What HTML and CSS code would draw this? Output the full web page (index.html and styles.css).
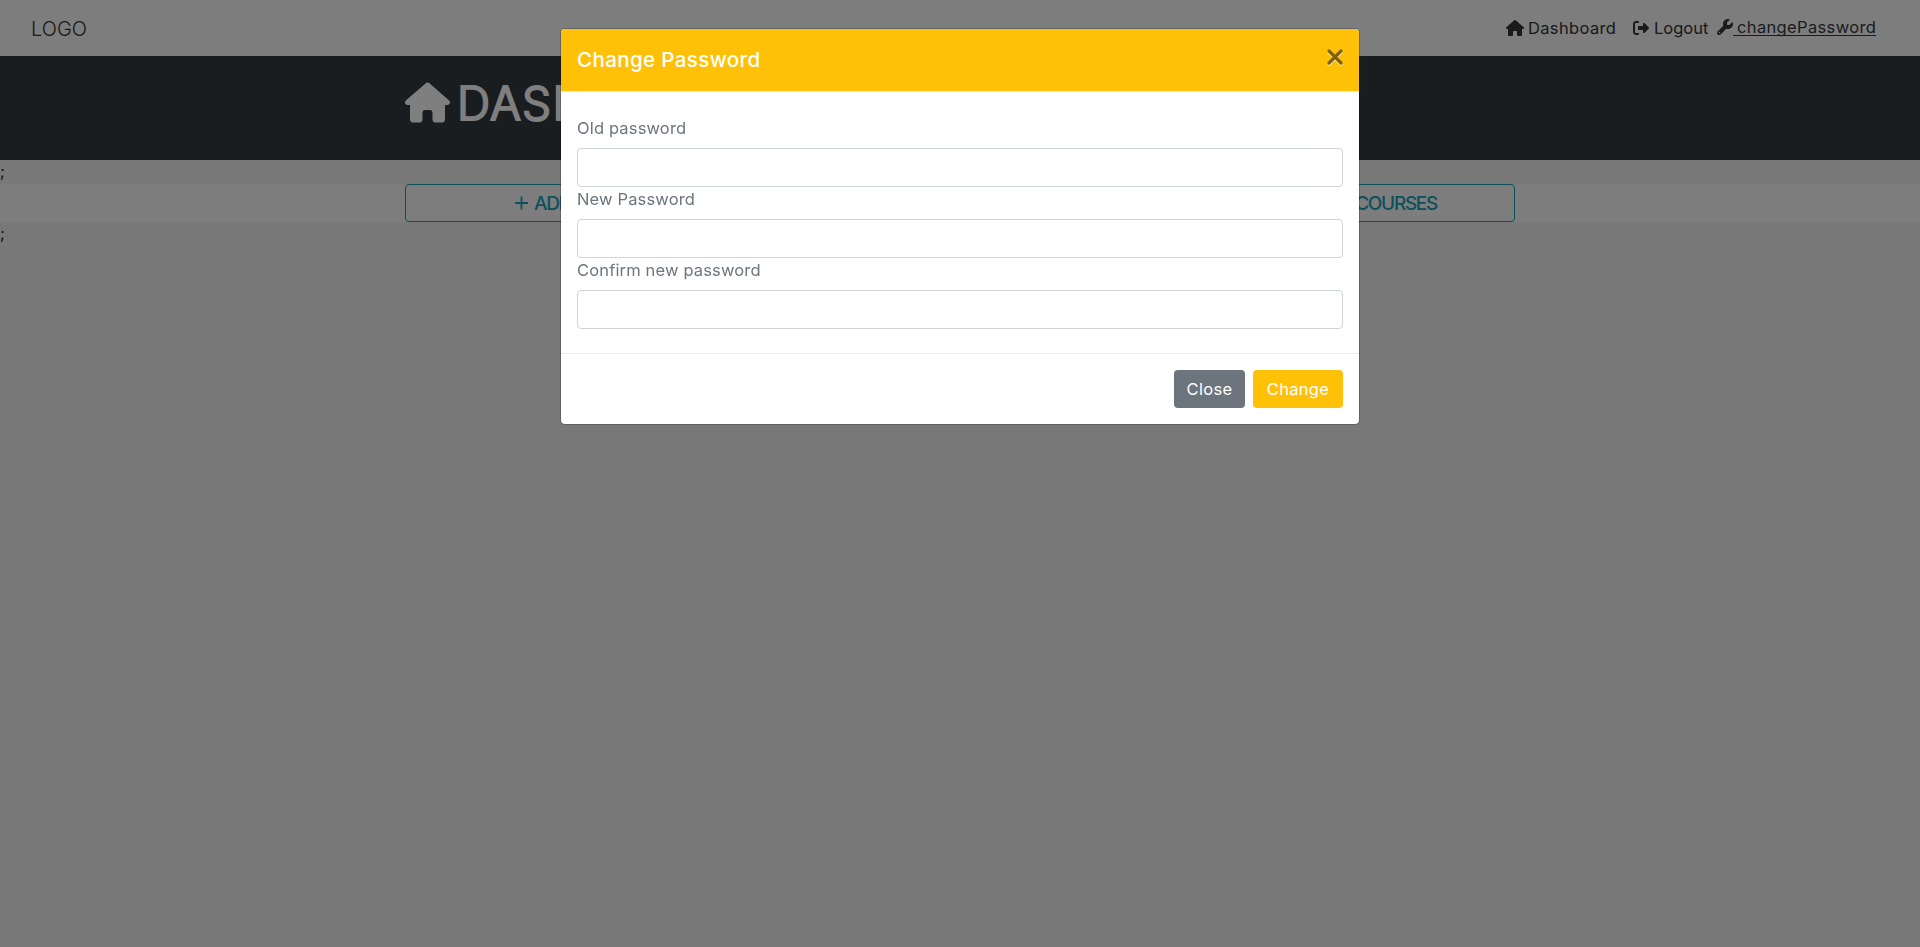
FILE: index.html
```html
<!DOCTYPE html>
<html lang="en">
<head>
<meta charset="utf-8">
<title>Dashboard</title>
<link rel="stylesheet" href="styles.css">
</head>
<body>
<svg class="sprite" aria-hidden="true">
  <symbol id="house" viewBox="0 0 576 512"><path d="M575.8 255.5c0 18-15 32.1-32 32.1h-32l.7 160.2c0 2.7-.2 5.4-.5 8.1V472c0 22.1-17.9 40-40 40H456c-1.100 0-2.200 0-3.300-.1c-1.400 .1-2.800 .1-4.200 .1H416 392c-22.100 0-40-17.900-40-40V448 384c0-17.700-14.300-32-32-32H256c-17.700 0-32 14.300-32 32v64 24c0 22.100-17.900 40-40 40H160 128.100c-1.500 0-3-.1-4.500-.2c-1.200 .1-2.400 .2-3.600 .2H104c-22.100 0-40-17.900-40-40V360c0-.9 0-1.900 .1-2.800V287.600H32c-18 0-32-14-32-32.100c0-9 3-17 10-24L266.400 8c7-7 15-8 22-8s15 2 21 7L564.800 231.500c8 7 12 15 11 24z"/></symbol>
  <symbol id="exit" viewBox="0 0 512 512"><path d="M377.900 105.900L500.700 228.700c7.200 7.200 11.300 17.100 11.300 27.300s-4.100 20.100-11.300 27.300L377.900 406.100c-6.400 6.400-15 9.900-24 9.900c-18.700 0-33.900-15.200-33.900-33.900l0-62.100-128 0c-17.700 0-32-14.300-32-32l0-64c0-17.700 14.300-32 32-32l128 0 0-62.100c0-18.700 15.200-33.900 33.900-33.900c9 0 17.600 3.600 24 9.900zM160 96L96 96c-17.700 0-32 14.300-32 32l0 256c0 17.700 14.300 32 32 32l64 0c17.700 0 32 14.300 32 32s-14.300 32-32 32l-64 0c-53 0-96-43-96-96L0 128C0 75 43 32 96 32l64 0c17.700 0 32 14.300 32 32s-14.300 32-32 32z"/></symbol>
  <symbol id="wrench" viewBox="0 0 512 512"><path d="M352 320c88.400 0 160-71.600 160-160c0-15.300-2.200-30.100-6.200-44.200c-3.100-10.800-16.400-13.200-24.300-5.300l-76.800 76.800c-3 3-7.100 4.700-11.300 4.700H336c-8.800 0-16-7.200-16-16V118.600c0-4.200 1.700-8.300 4.700-11.300l76.800-76.800c7.900-7.900 5.400-21.200-5.300-24.300C382.100 2.200 367.300 0 352 0C263.600 0 192 71.600 192 160c0 19.100 3.400 37.500 9.500 54.500L19.900 396.100C7.200 408.800 0 426.100 0 444.100C0 481.600 30.400 512 67.900 512c18 0 35.300-7.200 48-19.900L297.500 310.500c17 6.200 35.400 9.500 54.500 9.500zM80 408a24 24 0 1 1 0 48 24 24 0 1 1 0-48z"/></symbol>
</svg>

<nav class="navbar">
  <a class="brand">LOGO</a>
  <div class="links">
    <a class="link home"><svg class="i-house"><use href="#house"/></svg><span>Dashboard</span></a>
    <a class="link out"><svg class="i-sq"><use href="#exit"/></svg><span>Logout</span></a>
    <a class="link change"><svg class="i-sq"><use href="#wrench"/></svg><span class="t-change">changePassword</span></a>
  </div>
</nav>
<header class="banner">
  <h1 class="container title"><svg class="i-big"><use href="#house"/></svg><span>DASHBOARD</span></h1>
</header>
<div class="semi">;</div>
<section class="actions">
  <div class="container grid">
    <button class="outline add"><svg class="plus" viewBox="0 0 13 14"><path d="M6.500 .5v13M0 7h13"/></svg><span>ADD USERS</span></button>
    <button class="outline mid"><span>USERS</span></button>
    <button class="outline courses"><span>COURSES</span></button>
  </div>
</section>
<div class="semi">;</div>

<div class="backdrop">
  <form class="modal">
    <div class="modal-header">
      <h5 class="modal-title">Change Password</h5>
      <svg class="close" viewBox="0 0 16 17"><path class="glow" d="M2 3l12 12M14 3L2 15"/><path d="M2 2l12 12M14 2L2 14"/></svg>
    </div>
    <div class="modal-body">
      <label for="old">Old password</label>
      <input id="old" type="password">
      <label for="new">New Password</label>
      <input id="new" type="password">
      <label for="conf">Confirm new password</label>
      <input id="conf" type="password">
    </div>
    <div class="modal-footer">
      <button type="button" class="btn grey">Close</button>
      <button type="button" class="btn yellow">Change</button>
    </div>
  </form>
</div>
</body>
</html>
```
FILE: styles.css
```css
* { box-sizing: border-box; }
body {
  margin: 0;
  height: 947px;
  overflow: hidden;
  background: #f0f0f0;
  color: #212529;
  font: 400 16px/24px Inter, "Open Sans", sans-serif;
}
svg { fill: currentColor; flex: none; }
.sprite { display: none; }
.navbar {
  height: 56px;
  padding: 0 44px 0 31px;
  display: flex;
  align-items: center;
  justify-content: space-between;
  background: #fafafa;
  color: #343434;
}
.brand { font-size: 20px; letter-spacing: 0; font-weight: 350; padding-top: 1px; }
.links { display: flex; align-items: center; font-size: 16.5px; letter-spacing: 0.35px; }
.link { display: flex; align-items: center; }
.home { width: 127px; gap: 4px; }
.out { width: 84px; gap: 5px; }
.out span { letter-spacing: 0; }
.change { width: 159px; color: #343a40; padding-bottom: 2px; }
.i-house { width: 18px; height: 16px; }
.i-sq { width: 16px; height: 16px; }
.t-change {
  flex: 1;
  padding-left: 4px;
  line-height: 16px;
  white-space: nowrap;
  height: 17px;
  border-bottom: 1px solid currentColor;
}
.banner { height: 104px; background: #343a40; color: #fff; }
.container { width: 1110px; margin: 0 auto; }
.title {
  padding-top: 26px;
  display: flex;
  gap: 7px;
  font-weight: 300;
  font-size: 46px;
  line-height: 43px;
  letter-spacing: 1.2px;
  -webkit-text-stroke: 2px #fff;
  stroke-linejoin: round;
}
.i-big { width: 45px; height: 41px; stroke: none; }
.semi { height: 24px; line-height: 22px; }
.actions { height: 38px; background: #fafafa; }
.grid { display: grid; grid-template-columns: repeat(3, 1fr); gap: 30px; }
.outline {
  height: 38px;
  display: flex;
  align-items: center;
  border: 1px solid #17a2b8;
  border-radius: 4px;
  background: transparent;
  color: #17a2b8;
  font: 450 19px/24px Inter, sans-serif;
  letter-spacing: -1.3px;
}
.outline span { padding-top: 1px; }
.add { padding: 0 0 0 109px; gap: 6px; }
.mid { justify-content: center; }
.courses { justify-content: flex-end; padding: 0 77px 0 0; }
.plus { width: 13px; height: 14px; stroke: currentColor; stroke-width: 1.8; }
.backdrop {
  position: fixed;
  inset: 0;
  display: flex;
  justify-content: center;
  align-items: flex-start;
  padding-top: 28px;
  background: rgba(0, 0, 0, 0.5);
}
.modal {
  width: 800px;
  border: 1px solid rgba(0, 0, 0, 0.2);
  border-radius: 5px;
  background: #fff;
  background-clip: padding-box;
  overflow: hidden;
}
.modal-header {
  height: 63px;
  padding: 0 16px;
  display: flex;
  align-items: center;
  justify-content: space-between;
  background: #ffc107;
  background-clip: padding-box;
  border-bottom: 1px solid #e9ecef;
  color: #fff;
}
.modal-title { margin: 0; font-size: 20.5px; font-weight: 500; letter-spacing: 0.4px; }
.close { width: 16px; height: 17px; margin-bottom: 6px; stroke: #80610a; stroke-width: 3.2; stroke-linecap: round; }
.close .glow { stroke: #fff3c0; }
.modal-body {
  height: 261px;
  padding: 24px 16px 0;
  display: flex;
  flex-direction: column;
}
label { height: 32px; color: #6c757d; font-size: 16.5px; letter-spacing: 0.15px; }
input {
  height: 39px;
  width: 100%;
  border: 1px solid #ced4da;
  border-radius: 4px;
  background: #fff;
}
.modal-footer {
  height: 71px;
  padding: 16px;
  display: flex;
  justify-content: flex-end;
  gap: 8px;
  border-top: 1px solid #e9ecef;
}
.btn {
  height: 38px;
  padding: 0;
  border: 0;
  border-radius: 4px;
  color: #fff;
  font: 400 16.5px/24px Inter, sans-serif;
  letter-spacing: 0.3px;
}
.grey { width: 71px; background: #6c757d; }
.yellow { width: 90px; background: #ffc107; }
```
